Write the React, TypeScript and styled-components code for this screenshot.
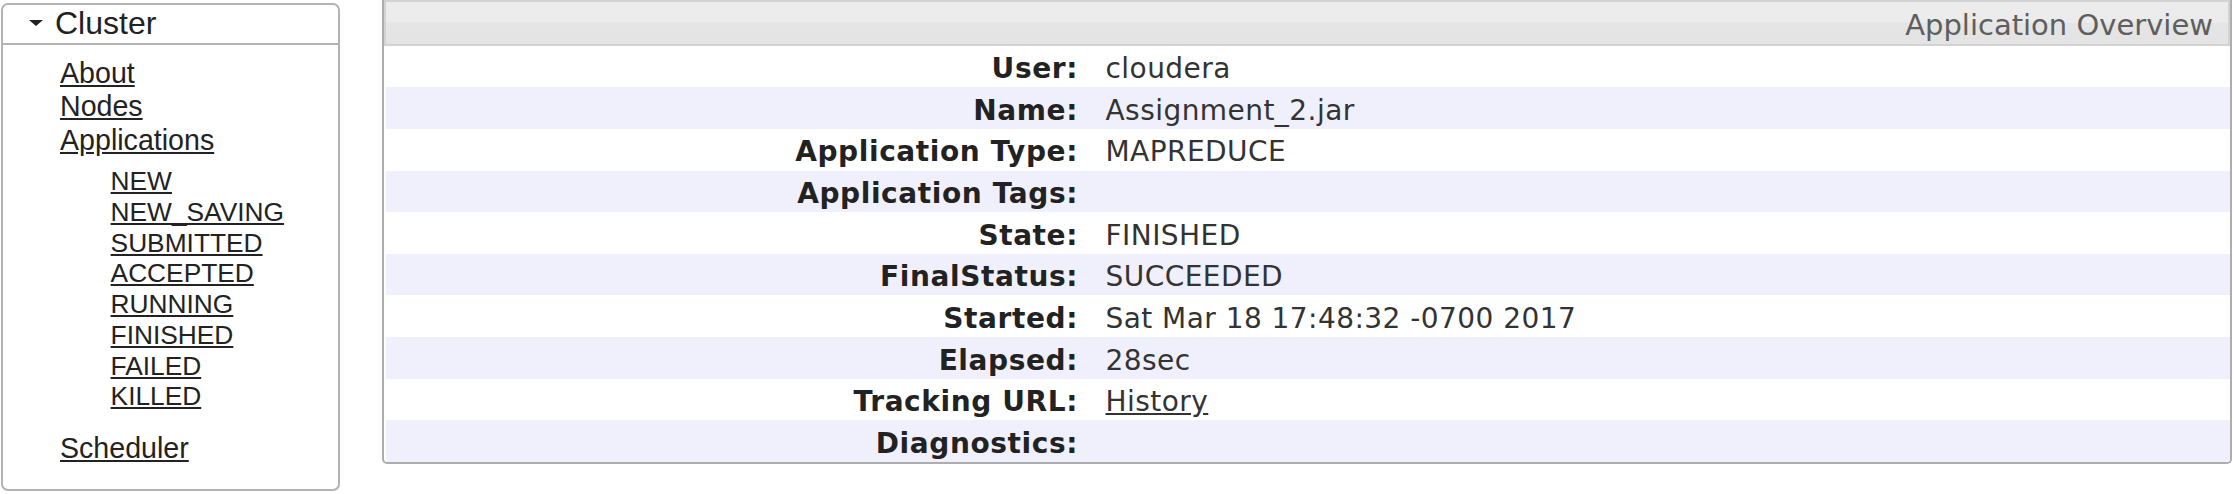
import React from 'react';
import styled, { createGlobalStyle } from 'styled-components';

interface Field {
  label: string;
  value?: string;
  link?: boolean;
}

const fields: Field[] = [
  { label: 'User:', value: 'cloudera' },
  { label: 'Name:', value: 'Assignment_2.jar' },
  { label: 'Application Type:', value: 'MAPREDUCE' },
  { label: 'Application Tags:' },
  { label: 'State:', value: 'FINISHED' },
  { label: 'FinalStatus:', value: 'SUCCEEDED' },
  { label: 'Started:', value: 'Sat Mar 18 17:48:32 -0700 2017' },
  { label: 'Elapsed:', value: '28sec' },
  { label: 'Tracking URL:', value: 'History', link: true },
  { label: 'Diagnostics:' },
];

const appStates = ['NEW', 'NEW_SAVING', 'SUBMITTED', 'ACCEPTED', 'RUNNING', 'FINISHED', 'FAILED', 'KILLED'];

const App: React.FC = () => {
  //render
  return (
    <>
      <GlobalStyle />
      <Page>
        <Nav>
          <NavHeader>
            <svg width="14" height="7" viewBox="0 0 14 7">
              <polygon points="0,0 14,0 7,6" fill="#222" />
            </svg>
            <span>Cluster</span>
          </NavHeader>
          <NavBody>
            <MainList>
              <li>
                <NavLink href="#">About</NavLink>
              </li>
              <li>
                <NavLink href="#">Nodes</NavLink>
              </li>
              <li>
                <NavLink href="#">Applications</NavLink>
                <SubList>
                  {appStates.map((s) => (
                    <li key={s}>
                      <NavLink href="#">{s}</NavLink>
                    </li>
                  ))}
                </SubList>
              </li>
            </MainList>
            <MainList $spaced>
              <li>
                <NavLink href="#">Scheduler</NavLink>
              </li>
            </MainList>
          </NavBody>
        </Nav>

        <Overview>
          <OverviewHeader>Application Overview</OverviewHeader>
          <InfoTable>
            {fields.map((f, index) => (
              <InfoRow key={f.label} $odd={index % 2 === 1}>
                <InfoLabel>{f.label}</InfoLabel>
                <InfoValue>{f.link ? <ValueLink href="#">{f.value}</ValueLink> : f.value}</InfoValue>
              </InfoRow>
            ))}
          </InfoTable>
        </Overview>
      </Page>
    </>
  );
};

//styles
const GlobalStyle = createGlobalStyle`
  html, body {
    margin: 0;
    padding: 0;
    background: #fff;
  }
  * {
    box-sizing: border-box;
  }
`;

const Page = styled.div`
  display: flex;
  align-items: flex-start;
  gap: 42px;
  padding-left: 1px;
`;

const Nav = styled.div`
  width: 339px;
  margin-top: 3px;
  border: 2px solid #b3b3b3;
  border-radius: 7px;
  font-family: 'Liberation Sans', Arial, sans-serif;
  color: #222;
`;

const NavHeader = styled.div`
  display: flex;
  align-items: center;
  gap: 12px;
  height: 40px;
  padding: 0 0 2px 26px;
  border-bottom: 2px solid #b3b3b3;
  font-size: 32px;
  line-height: 33px;
`;

const NavBody = styled.div`
  padding: 11.5px 0 22.6px 57px;
`;

const MainList = styled.ul<{ $spaced?: boolean }>`
  list-style: none;
  margin: ${(p) => (p.$spaced ? '20.5px' : '0')} 0 0 0;
  padding: 0;
  font-size: 28.6px;
  line-height: 33.5px;
`;

const SubList = styled.ul`
  list-style: none;
  margin: 9.3px 0 0 0;
  padding: 0 0 0 50.6px;
  font-size: 26.3px;
  line-height: 30.7px;
`;

const NavLink = styled.a`
  color: #222;
  text-decoration: underline;
`;

const Overview = styled.div`
  width: 1850px;
  border: 2px solid #adadad;
  border-top: none;
  border-radius: 0 0 5px 5px;
  font-family: 'DejaVu Sans', 'Liberation Sans', sans-serif;
  overflow: hidden;
`;

const OverviewHeader = styled.div`
  height: 45.7px;
  padding: 5.4px 15px 0 0;
  border: 2px solid #d3d3d3;
  background: linear-gradient(to bottom, #ececec 0, #ebebeb 48%, #e5e5e5 50%, #e3e3e3 100%);
  color: #5e5e5e;
  font-size: 29px;
  line-height: 36.3px;
  text-align: right;
`;

const InfoTable = styled.div`
  padding: 0 0 0 2px;
`;

const InfoRow = styled.div<{ $odd: boolean }>`
  display: grid;
  grid-template-columns: 692px 1fr;
  height: 41.63px;
  padding: 7.5px 0 1.5px 0;
  background: ${(p) => (p.$odd ? '#f0f0fc' : '#fff')};
  font-size: 28px;
  line-height: 32.6px;
`;

const InfoLabel = styled.div`
  text-align: right;
  font-weight: bold;
  color: #222;
  letter-spacing: 0.6px;
  white-space: nowrap;
`;

const InfoValue = styled.div`
  padding-left: 27.5px;
  color: #333;
  letter-spacing: 0.45px;
  white-space: nowrap;
`;

const ValueLink = styled.a`
  color: #333;
  text-decoration: underline;
`;

export default App;
